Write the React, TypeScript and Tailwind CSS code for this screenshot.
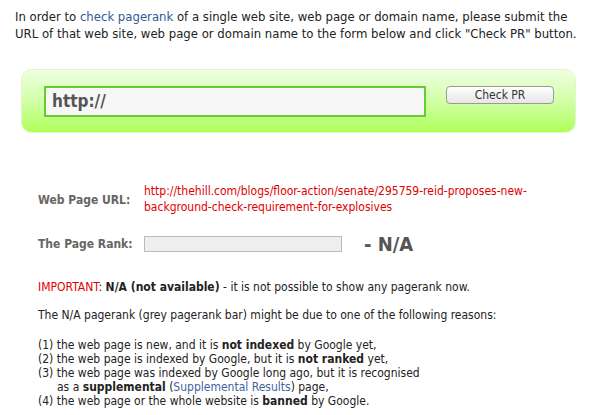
import React from 'react';

/**
 * PageRank checker result page
 */
const reasons: React.ReactNode[] = [
  <>(1) the web page is new, and it is <b>not indexed</b> by Google yet,</>,
  <>(2) the web page is indexed by Google, but it is <b>not ranked</b> yet,</>,
  <>
    (3) the web page was indexed by Google long ago, but it is recognised
    <br />
    <span className="pl-[19px]">
      as a <b>supplemental</b> (<a className="text-[#3f62a0]">Supplemental Results</a>) page,
    </span>
  </>,
  <>(4) the web page or the whole website is <b>banned</b> by Google.</>,
];

export default function App() {
  return (
    <div className="w-[604px] h-[415px] bg-white text-[#222] font-['DejaVu_Sans_Condensed','DejaVu_Sans',sans-serif] overflow-hidden">
      <p className="ml-[15px] pt-[8px] w-[568px] text-[13px] leading-[17px]">
        In order to <a className="text-[#2f5a9c]">check pagerank</a> of a single web site, web page or domain name, please submit the
        URL of that web site, web page or domain name to the form below and click "Check PR" button.
      </p>

      <div className="ml-[21px] mt-[27px] w-[555px] h-[64px] rounded-[11px] border border-[#dff8c6] bg-gradient-to-b from-[#f0ffe2] to-[#afff55] flex items-start pt-[16px] pl-[22px]">
        <div className="w-[382px] h-[31px] border-2 border-[#66cc33] bg-[#f7f7f7] flex items-center pl-[6px]">
          <span className="text-[17px] font-bold text-[#555]">http://</span>
        </div>
        <button className="ml-[20px] w-[108px] h-[18px] rounded-[4px] border border-[#999] bg-gradient-to-b from-white to-[#e6e6e6] text-[12px] leading-[16px] text-[#333]">
          Check PR
        </button>
      </div>

      <div className="pl-[38px] mt-[50px] text-[12px]">
        <div className="flex">
          <div className="w-[106px] pt-[8px] font-bold text-[#666]">Web Page URL:</div>
          <div className="text-[#e00000] leading-[16px]">
            http://thehill.com/blogs/floor-action/senate/295759-reid-proposes-new-
            <br />
            background-check-requirement-for-explosives
          </div>
        </div>
        <div className="flex items-center mt-[14px]">
          <div className="w-[106px] font-bold text-[#666]">The Page Rank:</div>
          <div className="w-[198px] h-[16px] bg-[#eeeeee] border border-[#bbbbbb]" />
          <div className="ml-[22px] text-[20px] font-bold text-[#555]">- N/A</div>
        </div>

        <p className="mt-[21px] leading-[14px]">
          <b className="text-[#e00000] font-normal">IMPORTANT</b>: <b>N/A (not available)</b> - it is not possible to show any pagerank now.
        </p>
        <p className="mt-[14px] leading-[14px]">
          The N/A pagerank (grey pagerank bar) might be due to one of the following reasons:
        </p>
        <ul className="mt-[16px] leading-[14px]">
          {reasons.map((r, i) => (
            <li key={i}>{r}</li>
          ))}
        </ul>
      </div>
    </div>
  );
}
